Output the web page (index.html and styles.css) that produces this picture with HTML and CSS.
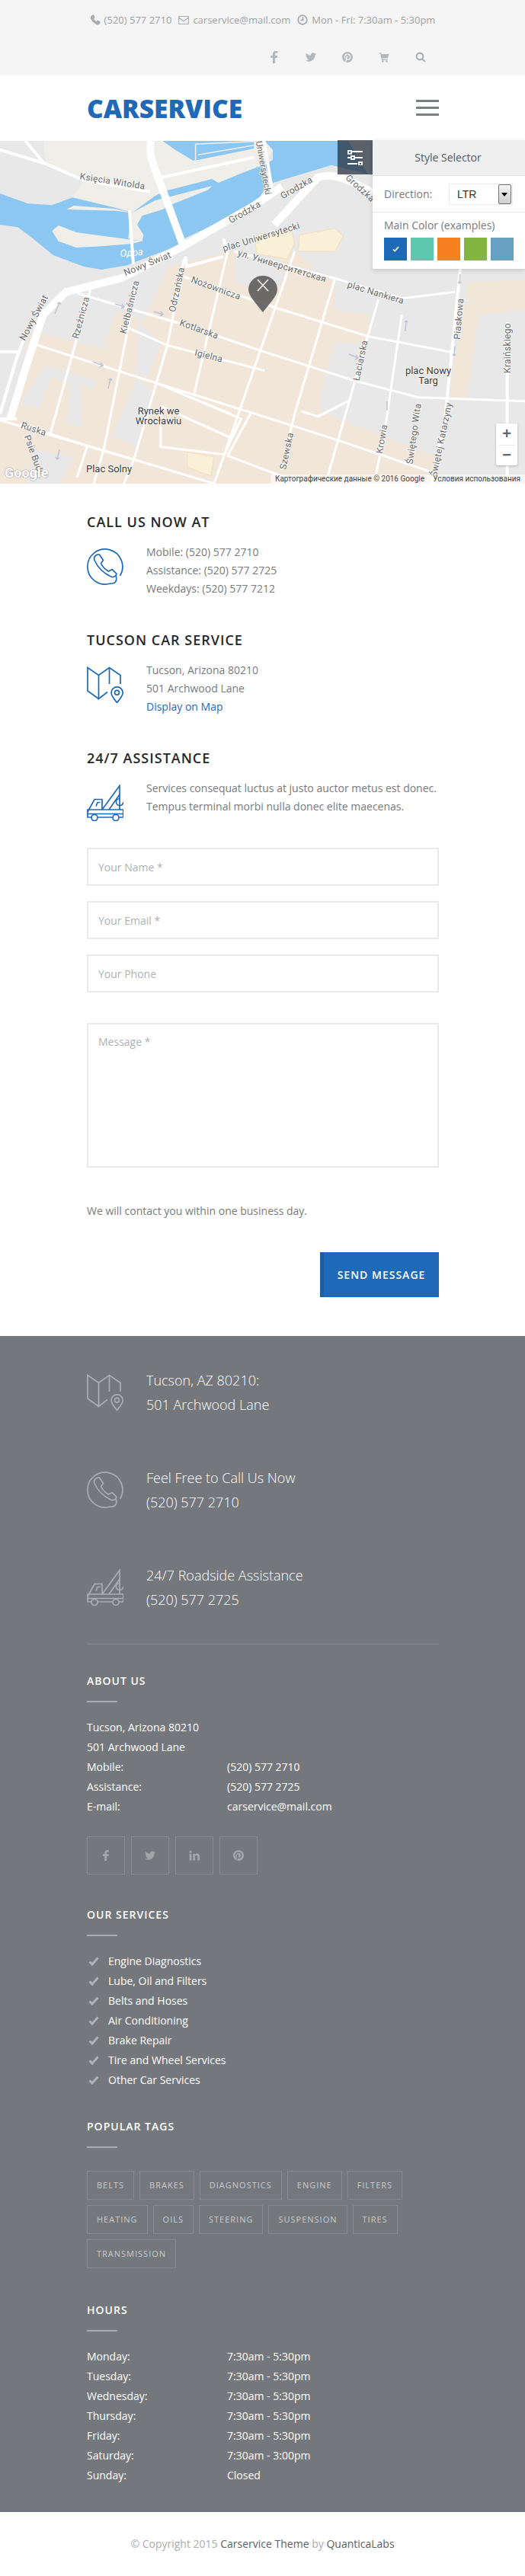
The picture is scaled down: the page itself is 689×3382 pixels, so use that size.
FILE: index.html
```html
<!DOCTYPE html>
<html>
<head>
    <meta charset="UTF-8">
    <meta name="viewport" content="width=device-width, initial-scale=1.0">
    <title>Contact - Carservice</title>
    <link rel="stylesheet" href="styles.css">
</head>
<body>
    <!-- icones reutilisees -->
    <svg class="icon-defs" width="0" height="0">
        <symbol id="i-phone-round" viewBox="0 0 48 48">
            <path d="M43.5 36A23 23 0 1 0 30 46.2C35 46.6 38 44.5 38.6 41.5 39 39.5 38.6 37 38 35"/>
            <path d="M11.5 9.5C9.5 11 9 13 10 15.5 14 24.5 22 32.500 31.500 37 34.500 38.200 37.500 36.800 39 33.500L33.200 27.500 28.500 30C24.500 28 20.500 24 18.500 19.500L21.500 15.500 16.500 8.200C15 7.400 13 8.200 11.500 9.500Z"/>
        </symbol>
        <symbol id="i-map" viewBox="0 0 48 48">
            <path d="M15.500 42.500L1 32V1.500L15.500 11.500 29.500 1.500 44 11.500V23"/>
            <path d="M15.500 11.500V42.500L27 33.500M29.500 1.500V23"/>
            <path d="M39.500 47.500C35 42 32 38.500 32 34.500A7.600 7.600 0 0 1 47.200 34.500C47.200 38.500 44 42 39.500 47.500Z"/>
            <circle cx="39.500" cy="34.300" r="3"/>
        </symbol>
        <symbol id="i-tow" viewBox="0 0 48 48">
            <path d="M20 33H1L1 37.500V43H6M14.500 43H33.500M42 43H47.800V33H20"/>
            <path d="M1 36L10 19.500H20V33M12 28.500L14 23.500H17.500"/>
            <path d="M20 33L43 1.500V33M29 33L43 13M1 38.500H47.800"/>
            <path d="M43 18.500A4.500 4.500 0 0 0 43 27.500 4.500 4.500 0 0 0 47.800 23"/>
            <circle cx="10" cy="43.500" r="4"/>
            <circle cx="38" cy="43.500" r="4"/>
        </symbol>
        <symbol id="i-fb" viewBox="0 0 16 24">
            <path d="M10.800 0C7 0 5 2.200 5 5.700V9H1v4.500h4V24h4.800V13.500h4l.6-4.500H9.800V6.200c0-1.400.4-2.100 2-2.100h2.700V.2C14 .1 12.500 0 10.800 0z"/>
        </symbol>
        <symbol id="i-tw" viewBox="0 0 24 24">
            <path d="M23.953 4.570a10 10 0 01-2.825.775 4.958 4.958 0 002.163-2.723c-.951.555-2.005.959-3.127 1.184a4.920 4.920 0 00-8.384 4.482C7.690 8.095 4.067 6.130 1.640 3.162a4.822 4.822 0 00-.666 2.475c0 1.710.870 3.213 2.188 4.096a4.904 4.904 0 01-2.228-.616v.060a4.923 4.923 0 003.946 4.827 4.996 4.996 0 01-2.212.085 4.936 4.936 0 004.604 3.417 9.867 9.867 0 01-6.102 2.105c-.390 0-.779-.023-1.170-.067a13.995 13.995 0 007.557 2.209c9.053 0 13.998-7.496 13.998-13.985 0-.210 0-.420-.015-.630A9.935 9.935 0 0024 4.590z"/>
        </symbol>
        <symbol id="i-pin" viewBox="0 0 24 24">
            <path d="M12.017 0C5.396 0 .029 5.367.029 11.987c0 5.079 3.158 9.417 7.618 11.162-.105-.949-.199-2.403.041-3.439.219-.937 1.406-5.957 1.406-5.957s-.359-.720-.359-1.781c0-1.663.967-2.911 2.168-2.911 1.024 0 1.518.769 1.518 1.688 0 1.029-.653 2.567-.992 3.992-.285 1.193.600 2.165 1.775 2.165 2.128 0 3.768-2.245 3.768-5.487 0-2.861-2.063-4.869-5.008-4.869-3.410 0-5.409 2.562-5.409 5.199 0 1.033.394 2.143.889 2.741.099.120.112.225.085.345-.090.375-.293 1.199-.334 1.363-.053.225-.172.271-.401.165-1.495-.690-2.433-2.878-2.433-4.646 0-3.776 2.748-7.252 7.920-7.252 4.158 0 7.392 2.967 7.392 6.923 0 4.135-2.607 7.462-6.233 7.462-1.214 0-2.354-.629-2.758-1.379l-.749 2.848c-.269 1.045-1.004 2.352-1.498 3.146 1.123.345 2.306.535 3.550.535 6.607 0 11.985-5.365 11.985-11.987C23.970 5.390 18.592.026 11.985.026L12.017 0z"/>
        </symbol>
        <symbol id="i-in" viewBox="0 0 24 24">
            <path d="M1 8h4.800v15H1zM3.400 1a2.700 2.700 0 1 1 0 5.400 2.700 2.700 0 0 1 0-5.400zM9 8h4.600v2.100c.7-1.300 2.300-2.500 4.700-2.500 4.600 0 5.700 3 5.700 7V23h-4.800v-7.400c0-1.800 0-4-2.500-4s-2.900 1.900-2.900 3.900V23H9z"/>
        </symbol>
        <symbol id="i-cart" viewBox="0 0 24 24">
            <path d="M1 2h4.500l.8 3H23l-2.500 9.500H8.600l.5 2H20v2.500H7L3.800 4.500H1z"/>
            <circle cx="9" cy="21.500" r="2.300"/>
            <circle cx="18" cy="21.500" r="2.300"/>
        </symbol>
        <symbol id="i-check" viewBox="0 0 14 12">
            <path d="M1.500 6.500L5 10 12.500 1.500"/>
        </symbol>
    </svg>

    <div class="topbar">
        <ul class="top-contact">
            <li>
                <svg class="top-ico" viewBox="0 0 14 14"><path class="ico-fill" d="M3 .8L5 .3 6.700 4 5.200 5.400C5.800 7.200 7 8.400 8.700 9.100L10.200 7.600 13.700 9.500 13.200 11.500C12.500 13 10.800 13.800 9 13.200 5.200 11.800 2.300 8.800 1 5 .5 3.200 1.500 1.500 3 .8Z"/></svg>
                (520) 577 2710
            </li>
            <li>
                <svg class="top-ico" viewBox="0 0 14 14"><path class="ico-line" d="M.7 2.500H13.300V12.500H.7ZM.7 4L7 9 13.300 4"/></svg>
                carservice@mail.com
            </li>
            <li>
                <svg class="top-ico" viewBox="0 0 14 14"><circle class="ico-line ico-thick" cx="7" cy="7" r="5.800"/><path class="ico-line ico-thick" d="M7.500 3.500V7.500H4.500"/></svg>
                Mon - Fri: 7:30am - 5:30pm
            </li>
        </ul>
        <ul class="top-social">
            <li><svg class="top-soc"><use href="#i-fb"/></svg></li>
            <li><svg class="top-soc"><use href="#i-tw"/></svg></li>
            <li><svg class="top-soc"><use href="#i-pin"/></svg></li>
            <li><svg class="top-soc"><use href="#i-cart"/></svg></li>
            <li>
                <svg class="top-soc" viewBox="0 0 16 16"><circle class="ico-line ico-search" cx="6.800" cy="6.800" r="5"/><path class="ico-line ico-search" d="M10.500 10.500L14.800 15"/></svg>
            </li>
        </ul>
    </div>

    <header class="site-header">
        <a href="#" class="logo">CARSERVICE</a>
        <div class="burger"><span></span><span></span><span></span></div>
    </header>

    <section class="map">
        <svg class="map-svg" viewBox="0 0 689 450" width="689" height="450">
            <rect class="m-base" width="689" height="450"/>

            <!-- riviere et quais, coordonnees du zoom gauche -->
            <g transform="translate(0,-5) scale(.3333)">
                <path class="m-land" d="M170 15H1075V50L1040 110 1040 230 640 330 510 292 285 238 330 170 180 105Z"/>
                <path class="m-water" d="M0 222L110 262 205 268 285 238 455 278 520 298 610 232 650 212 700 400 720 420 500 505 400 522 330 510 210 465 130 400 70 355 0 345Z"/>
                <path class="m-water" d="M650 212L835 165 860 180 945 145 1035 110 1040 210 1000 270 725 400 670 270Z"/>
                <path class="m-water" d="M640 15L690 50 760 92 780 90 1000 45V15Z"/>
                <path class="m-land" d="M262 285L290 270 450 282 520 298 610 250 835 192 820 208 670 268 640 285 560 310 540 345 565 385 560 410 505 400 515 298 455 290Z"/>
                <path class="m-land" d="M205 370L230 348 300 375 450 395 560 410 520 420 400 430 300 435 230 410Z"/>
                <path class="m-pier" d="M770 90V28L1000 17M780 70L1000 32"/>
            </g>

            <!-- ilots et batiments, coordonnees du zoom bas -->
            <g transform="translate(0,145) scale(.4394,.3333)">
                <path class="m-beige" d="M500 60L680 0H880L1000 110V230L1110 250 1090 360 1000 360 955 580 960 630 1300 810 1290 915H0V665L50 620 70 440 90 310 310 385 345 235 430 270 490 100Z"/>
                <path class="m-beige" d="M1400 120L1568 110V230L1430 250 1395 580H1340L1380 270Z"/>
                <path class="m-base" d="M700 20L850 60 840 130 705 115Z"/>
                <path class="m-base" d="M930 30L1010 10V100L930 80Z"/>
                <path class="m-base" d="M135 450L290 510 280 540 240 530 245 690 200 680 210 520 150 495 120 620 60 600Z"/>
                <path class="m-base" d="M335 730L410 500 460 560 415 770Z"/>
                <path class="m-base" d="M415 280L480 360 440 500 405 480Z"/>
                <path class="m-base" d="M100 780L220 810 180 915H80Z"/>
                <path class="m-yellow" d="M560 790L640 810 630 885 560 850Z"/>
            </g>
            <g transform="translate(0,-5) scale(.3333)">
                <path class="m-yellow" d="M1005 410L1020 380 1150 375 1160 420 1130 480 1010 460Z"/>
                <path class="m-base" d="M925 570L960 420 1000 420 1005 460 1100 480 1070 560 990 590Z"/>
            </g>
            <g transform="translate(0,-185) scale(.4394,.3333)">
                <path class="m-water" d="M790 555H1110V690L990 650 815 720 790 650 815 630 815 590Z"/>
                <path class="m-yellow" d="M895 925L1000 900 1025 930 1000 990H890Z"/>
            </g>
            <path class="m-base" d="M457 0H489V44H483L466 15Z"/>

            <!-- rues -->
            <g transform="translate(0,145) scale(.4394,.3333)" class="m-roads">
                <path d="M230 165L540 285 800 400 1060 510 1250 575 1568 590"/>
                <path d="M550 100L830 225 1100 335 1360 400"/>
                <path d="M700 0L1010 110 1200 185 1360 160"/>
                <path d="M380 300L500 370 790 470"/>
                <path d="M90 360L470 520 750 635 1000 740 1290 870"/>
                <path d="M470 520L720 660 690 735 480 610M540 560L690 640M480 610V770L670 800 720 660M750 635L680 805 900 915"/>
                <path d="M0 665L400 820 640 915"/>
                <path d="M680 0L580 560M880 0L640 915M1000 110L880 640 840 860M1130 190L980 880M1200 250L1150 700 1120 900"/>
                <path d="M410 120L310 780 280 915M270 150L150 720M550 30L500 370 400 820 370 915"/>
                <path d="M60 680L270 770 400 820M260 770L230 890M900 630L950 650 1040 590"/>
            </g>
            <g transform="translate(0,145) scale(.4394,.3333)" class="m-roads m-wide">
                <path d="M1515 280V915M1380 0L1330 650 1290 915"/>
                <path d="M0 660H50M0 395H60M0 640L50 420 70 350"/>
            </g>
            <g transform="translate(0,-5) scale(.3333)" class="m-roads m-wide">
                <path d="M630 160L1000 80M0 50L180 105 330 170 590 215"/>
                <path d="M1040 15L1070 200M730 470L735 510 880 470M880 400L890 440"/>
                <path d="M510 290L525 500M100 15L175 105"/>
            </g>
            <g transform="translate(0,-5) scale(.3333)" class="m-roads m-main">
                <path d="M40 1110L110 880 170 700 260 610 480 555 720 430 1000 270 1110 195"/>
                <path d="M595 15Q585 60 605 110L720 425"/>
            </g>
            <path class="m-roads m-main2" d="M360 110L417 48C430 43 450 45 489 68"/>

            <!-- sens uniques -->
            <g class="m-arrows">
                <path d="M72 227L78 212M75 214L78 212 80 215"/>
                <path d="M151 214L163 218M160 214L163 218 159 220"/>
                <path d="M202 224L214 228M211 224L214 228 210 230"/>
                <path d="M122 290L135 295M132 291L135 295 131 297"/>
                <path d="M142 325L145 312M142 314L145 312 147 315"/>
                <path d="M78 405L75 418M73 415L75 418 78 416"/>
                <path d="M458 280L470 285M467 281L470 285 466 287"/>
                <path d="M532 250L533 236M531 238L533 236 535 238"/>
                <path d="M604 175L603 187M601 185L603 187 605 185"/>
                <path d="M597 270L596 282M594 280L596 282 598 280"/>
                <path d="M508 342L508 354"/>
            </g>

            <!-- noms de rues -->
            <g class="m-label">
                <text transform="translate(147,57) rotate(9)">Księcia Witolda</text>
                <text transform="translate(195,165) rotate(-22)">Nowy Świat</text>
                <text transform="translate(48,234) rotate(-62)">Nowy Świat</text>
                <text transform="translate(323,97) rotate(-30)">Grodzka</text>
                <text transform="translate(391,65) rotate(-30)">Grodzka</text>
                <text transform="translate(470,65) rotate(42)">Grodzka</text>
                <text transform="translate(344,130) rotate(-17)">plac Uniwersytecki</text>
                <text transform="translate(369,168) rotate(17)">ул. Университетская</text>
                <text transform="translate(110,233) rotate(-75)">Rzeźnicza</text>
                <text transform="translate(174,219) rotate(-76)">Kiełbaśnicza</text>
                <text transform="translate(236,196) rotate(-78)">Odrzańska</text>
                <text transform="translate(282,197) rotate(20)">Nożownicza</text>
                <text transform="translate(260,251) rotate(20)">Kotlarska</text>
                <text transform="translate(273,286) rotate(14)">Igielna</text>
                <text transform="translate(43,382) rotate(18)">Ruska</text>
                <text transform="translate(41,414) rotate(70)">Psie Budy</text>
                <text transform="translate(380,408) rotate(-78)">Szewska</text>
                <text transform="translate(492,203) rotate(17)">plac Nankiera</text>
                <text transform="translate(477,289) rotate(-78)">Łaciarska</text>
                <text transform="translate(606,234) rotate(-85)">Piaskowa</text>
                <text transform="translate(670,272) rotate(-90)">Kraińskiego</text>
                <text transform="translate(505,392) rotate(-80)">Krowia</text>
                <text transform="translate(547,385) rotate(-82)">Świętego Wita</text>
                <text transform="translate(583,393) rotate(-78)">Świętej Katarzyny</text>
                <text class="m-tight" transform="translate(342,36) rotate(80)">Uniwersytecki</text>
            </g>
            <g class="m-place">
                <text x="208" y="359">Rynek we</text>
                <text x="208" y="372">Wrocławiu</text>
                <text x="143" y="435">Plac Solny</text>
                <text x="562" y="306">plac Nowy</text>
                <text x="562" y="319">Targ</text>
            </g>
            <text class="m-river" transform="translate(173,151) rotate(-5)">Одра</text>
            <text class="m-google" x="6" y="442">Google</text>

            <!-- marqueur -->
            <path class="m-marker" d="M345 225C337 214 326 204 326 195A19 18 0 0 1 364 195C364 204 353 214 345 225Z"/>
            <path class="m-marker-x" d="M338 182L352 197M352 182L338 197"/>
        </svg>

        <div class="map-zoom">
            <span class="zoom-btn">+</span>
            <span class="zoom-btn">−</span>
        </div>
        <div class="map-terms">
            <span>Картографические данные © 2016 Google</span>
            <span>Условия использования</span>
        </div>

        <div class="selector-toggle">
            <svg viewBox="0 0 20 20" width="20" height="20">
                <path class="toggle-line" d="M6 2H20M0 10H4M10 10H20M0 18H13"/>
                <path class="toggle-line toggle-box" d="M1 .8H5V4.800H1ZM5 8H9V12H5ZM15 16H19V20H15Z"/>
            </svg>
        </div>
        <aside class="selector">
            <div class="selector-title">Style Selector</div>
            <div class="selector-row">
                <label>Direction:</label>
                <div class="fake-select">
                    <span>LTR</span>
                    <i class="fake-arrow"></i>
                </div>
            </div>
            <div class="selector-colors">
                <label>Main Color (examples)</label>
                <div class="swatches">
                    <span class="swatch c-blue">
                        <svg viewBox="0 0 14 12" width="9" height="8"><path d="M1.500 6.500L5 10 12.500 1.500"/></svg>
                    </span>
                    <span class="swatch c-teal"></span>
                    <span class="swatch c-orange"></span>
                    <span class="swatch c-green"></span>
                    <span class="swatch c-sky"></span>
                </div>
            </div>
        </aside>
    </section>

    <main class="contact">
        <h3 class="info-title">Call Us Now At</h3>
        <div class="info-row">
            <svg class="line-ico"><use href="#i-phone-round"/></svg>
            <p>Mobile: (520) 577 2710<br>Assistance: (520) 577 2725<br>Weekdays: (520) 577 7212</p>
        </div>

        <h3 class="info-title">Tucson Car Service</h3>
        <div class="info-row">
            <svg class="line-ico"><use href="#i-map"/></svg>
            <p>Tucson, Arizona 80210<br>501 Archwood Lane<br><a href="#">Display on Map</a></p>
        </div>

        <h3 class="info-title">24/7 Assistance</h3>
        <div class="info-row">
            <svg class="line-ico"><use href="#i-tow"/></svg>
            <p>Services consequat luctus at justo auctor metus est donec.<br>Tempus terminal morbi nulla donec elite maecenas.</p>
        </div>

        <form class="contact-form">
            <input type="text" placeholder="Your Name *">
            <input type="email" placeholder="Your Email *">
            <input type="text" placeholder="Your Phone">
            <textarea placeholder="Message *"></textarea>
            <p class="form-note">We will contact you within one business day.</p>
            <div class="form-actions">
                <button type="button" class="send-btn">Send Message</button>
            </div>
        </form>
    </main>

    <footer class="footer">
        <div class="foot-contact">
            <svg class="line-ico"><use href="#i-map"/></svg>
            <p>Tucson, AZ 80210:<br>501 Archwood Lane</p>
        </div>
        <div class="foot-contact">
            <svg class="line-ico"><use href="#i-phone-round"/></svg>
            <p>Feel Free to Call Us Now<br>(520) 577 2710</p>
        </div>
        <div class="foot-contact">
            <svg class="line-ico"><use href="#i-tow"/></svg>
            <p>24/7 Roadside Assistance<br>(520) 577 2725</p>
        </div>

        <hr class="foot-rule">

        <h4 class="foot-title">About Us</h4>
        <div class="foot-about">
            <div>Tucson, Arizona 80210</div>
            <div>501 Archwood Lane</div>
            <div class="two-col"><span>Mobile:</span><span>(520) 577 2710</span></div>
            <div class="two-col"><span>Assistance:</span><span>(520) 577 2725</span></div>
            <div class="two-col"><span>E-mail:</span><span>carservice@mail.com</span></div>
        </div>
        <ul class="foot-social">
            <li><svg><use href="#i-fb"/></svg></li>
            <li><svg><use href="#i-tw"/></svg></li>
            <li><svg><use href="#i-in"/></svg></li>
            <li><svg><use href="#i-pin"/></svg></li>
        </ul>

        <h4 class="foot-title">Our Services</h4>
        <ul class="foot-services">
            <li><svg class="check"><use href="#i-check"/></svg>Engine Diagnostics</li>
            <li><svg class="check"><use href="#i-check"/></svg>Lube, Oil and Filters</li>
            <li><svg class="check"><use href="#i-check"/></svg>Belts and Hoses</li>
            <li><svg class="check"><use href="#i-check"/></svg>Air Conditioning</li>
            <li><svg class="check"><use href="#i-check"/></svg>Brake Repair</li>
            <li><svg class="check"><use href="#i-check"/></svg>Tire and Wheel Services</li>
            <li><svg class="check"><use href="#i-check"/></svg>Other Car Services</li>
        </ul>

        <h4 class="foot-title">Popular Tags</h4>
        <div class="foot-tags">
            <a href="#">Belts</a>
            <a href="#">Brakes</a>
            <a href="#">Diagnostics</a>
            <a href="#">Engine</a>
            <a href="#">Filters</a>
            <a href="#">Heating</a>
            <a href="#">Oils</a>
            <a href="#">Steering</a>
            <a href="#">Suspension</a>
            <a href="#">Tires</a>
            <a href="#">Transmission</a>
        </div>

        <h4 class="foot-title">Hours</h4>
        <div class="foot-hours">
            <div class="two-col"><span>Monday:</span><span>7:30am - 5:30pm</span></div>
            <div class="two-col"><span>Tuesday:</span><span>7:30am - 5:30pm</span></div>
            <div class="two-col"><span>Wednesday:</span><span>7:30am - 5:30pm</span></div>
            <div class="two-col"><span>Thursday:</span><span>7:30am - 5:30pm</span></div>
            <div class="two-col"><span>Friday:</span><span>7:30am - 5:30pm</span></div>
            <div class="two-col"><span>Saturday:</span><span>7:30am - 3:00pm</span></div>
            <div class="two-col"><span>Sunday:</span><span>Closed</span></div>
        </div>
    </footer>

    <div class="copyright">
        © Copyright 2015&nbsp;<a href="#">Carservice Theme</a>&nbsp;by&nbsp;<a href="#">QuanticaLabs</a>
    </div>
</body>
</html>
```

FILE: styles.css
```css
* {
    margin: 0;
    padding: 0;
    box-sizing: border-box;
}

body {
    background-color: #ffffff;
    color: #777a7e;
    font-family: "Open Sans", "Liberation Sans", sans-serif;
    font-size: 14px;
    line-height: 24px;
}

ul {
    list-style: none;
}

a {
    text-decoration: none;
}

.icon-defs {
    position: absolute;
}

/* barre du haut */
.topbar {
    height: 99px;
    background-color: #f5f5f5;
    padding-top: 14px;
}

.top-contact {
    display: flex;
    justify-content: center;
    gap: 9px;
    font-size: 13px;
    color: #9da1a5;
}

.top-contact li {
    display: flex;
    align-items: center;
    gap: 5px;
}

.top-ico {
    width: 14px;
    height: 14px;
    flex: none;
}

.ico-fill {
    fill: #a9adb1;
}

.ico-line {
    fill: none;
    stroke: #a9adb1;
    stroke-width: 1.1;
}

.ico-thick {
    stroke-width: 1.8;
}

.ico-search {
    stroke-width: 2.4;
}

.top-social {
    display: flex;
    justify-content: flex-end;
    gap: 34px;
    padding-right: 130px;
    margin-top: 29px;
}

.top-soc {
    display: block;
    width: 14px;
    height: 16px;
    fill: #b5b8bb;
}

/* en-tete */
.site-header {
    height: 86px;
    background-color: #ffffff;
    display: flex;
    align-items: center;
    justify-content: space-between;
    padding: 0 113px 0 114px;
}

.logo {
    font-size: 34px;
    font-weight: 800;
    color: #1e69b8;
    transform: scaleX(.985);
    transform-origin: left center;
}

.burger {
    width: 30px;
    height: 21px;
    display: flex;
    flex-direction: column;
    justify-content: space-between;
    margin-top: -1px;
}

.burger span {
    display: block;
    height: 3px;
    background-color: #7c7f83;
}

/* carte */
.map {
    position: relative;
    height: 450px;
}

.map-svg {
    display: block;
}

.m-base {
    fill: #e8e8e8;
}

.m-land {
    fill: #f0eee9;
}

.m-water {
    fill: #8cc7f2;
}

.m-pier {
    fill: none;
    stroke: #f0eee9;
    stroke-width: 1.5;
    vector-effect: non-scaling-stroke;
}

.m-beige {
    fill: #f2e6d9;
}

.m-yellow {
    fill: #faf0d8;
    stroke: #f2dfbb;
    stroke-width: 1;
    vector-effect: non-scaling-stroke;
}

.m-roads path,
.m-main2 {
    fill: none;
    stroke: #ffffff;
    stroke-width: 3;
    vector-effect: non-scaling-stroke;
}

.m-wide path {
    stroke-width: 4;
}

.m-main path,
.m-main2 {
    stroke-width: 10;
}

.m-arrows path {
    fill: none;
    stroke: #bcc3d2;
    stroke-width: 1.5;
}

.m-label text {
    font-family: Roboto, "Liberation Sans", sans-serif;
    font-size: 12px;
    letter-spacing: .3px;
    fill: #6b6b6b;
    text-anchor: middle;
    stroke: #ffffff;
    stroke-width: 2px;
    stroke-opacity: .6;
    paint-order: stroke;
}

.m-label .m-tight {
    font-size: 11.5px;
    letter-spacing: 0;
}

.m-place text {
    font-family: Roboto, "Liberation Sans", sans-serif;
    font-size: 13px;
    fill: #3c3c3c;
    text-anchor: middle;
    stroke: #ffffff;
    stroke-width: 2px;
    stroke-opacity: .7;
    paint-order: stroke;
}

.m-river {
    font-family: Roboto, "Liberation Sans", sans-serif;
    font-size: 13px;
    font-style: italic;
    fill: #ffffff;
    text-anchor: middle;
}

.m-google {
    font-family: Roboto, "Liberation Sans", sans-serif;
    font-size: 18px;
    font-weight: 700;
    fill: #ffffff;
    stroke: #9a9a9a;
    stroke-width: 1px;
    paint-order: stroke;
}

.m-marker {
    fill: #5c5c5c;
    fill-opacity: .9;
}

.m-marker-x {
    fill: none;
    stroke: #f2f0ec;
    stroke-width: 1.6;
}

.map-zoom {
    position: absolute;
    left: 651px;
    top: 371px;
    width: 28px;
    height: 55px;
    background-color: #ffffff;
    box-shadow: 0 1px 3px rgba(0, 0, 0, 0.25);
    border-radius: 2px;
}

.zoom-btn {
    display: block;
    height: 27.5px;
    line-height: 27px;
    text-align: center;
    font-family: "Liberation Sans", sans-serif;
    font-size: 20px;
    font-weight: 700;
    color: #666666;
}

.zoom-btn + .zoom-btn {
    background: linear-gradient(#e6e6e6, #e6e6e6) center top / 20px 1px no-repeat;
}

.map-terms {
    position: absolute;
    right: 0;
    bottom: 0;
    left: 355px;
    height: 12px;
    padding: 0 6px;
    display: flex;
    justify-content: space-between;
    background: rgba(255, 255, 255, 0.6);
    font-family: Roboto, "Liberation Sans", sans-serif;
    font-size: 10px;
    line-height: 12px;
    color: #444444;
}

/* selecteur de style */
.selector-toggle {
    position: absolute;
    left: 443px;
    top: -1px;
    width: 46px;
    height: 45px;
    display: flex;
    align-items: center;
    justify-content: center;
    background: rgba(35, 45, 58, 0.72);
}

.toggle-line {
    fill: none;
    stroke: #ffffff;
    stroke-width: 1.8;
}

.selector {
    position: absolute;
    left: 489px;
    top: -1px;
    width: 200px;
    height: 169px;
    background-color: #ffffff;
    box-shadow: 0 2px 6px rgba(0, 0, 0, 0.15);
}

.selector-title {
    height: 47px;
    background-color: #efefef;
    border-bottom: 1px solid #e4e4e4;
    text-align: center;
    line-height: 46px;
    padding-right: 2px;
    color: #55585c;
}

.selector-row {
    height: 48px;
    display: flex;
    align-items: center;
    justify-content: space-between;
    padding: 0 16px 0 15px;
    border-bottom: 1px solid #e7e7e7;
}

.fake-select {
    width: 84px;
    height: 28px;
    display: flex;
    align-items: center;
    justify-content: space-between;
    padding-left: 10px;
    border: 1px solid #ececec;
    color: #333333;
    font-family: "Liberation Sans", sans-serif;
}

.fake-arrow {
    position: relative;
    width: 17px;
    height: 26px;
    margin-right: 1px;
    border: 1px solid #707070;
    border-radius: 2px;
    background: linear-gradient(#f4f4f4, #cfcfcf);
}

.fake-arrow::after {
    content: '';
    position: absolute;
    top: 10px;
    left: 3px;
    border-left: 4px solid transparent;
    border-right: 4px solid transparent;
    border-top: 5px solid #000000;
}

.selector-colors {
    padding: 5px 15px 0;
}

.swatches {
    display: flex;
    gap: 5px;
    margin-top: 4px;
}

.swatch {
    width: 30px;
    height: 30px;
    display: flex;
    align-items: center;
    justify-content: center;
}

.swatch svg {
    fill: none;
    stroke: #ffffff;
    stroke-width: 2.5;
}

.c-blue { background-color: #1e69b8; }
.c-teal { background-color: #5fc7ae; }
.c-orange { background-color: #f6821f; }
.c-green { background-color: #82b541; }
.c-sky { background-color: #66a1c3; }

/* bloc contact */
.contact {
    padding: 38px 113px 51px 114px;
}

.info-title {
    font-size: 18px;
    font-weight: 600;
    line-height: 24px;
    letter-spacing: 1px;
    text-transform: uppercase;
    color: #25282a;
    margin-bottom: 16px;
}

.info-row {
    display: flex;
    margin-bottom: 43px;
}

.info-row a {
    color: #1e69b8;
}

.line-ico {
    width: 48px;
    height: 48px;
    flex: none;
    margin: 7px 30px -7px 0;
    fill: none;
    stroke: #1e69b8;
    stroke-width: 1.7;
}

.contact-form {
    display: flex;
    flex-direction: column;
    gap: 20px;
    margin-top: -1px;
}

.contact-form input,
.contact-form textarea {
    display: block;
    width: 100%;
    height: 50px;
    padding: 0 13px;
    border: 2px solid #e8eaeb;
    background: #ffffff;
    font-family: "Open Sans", "Liberation Sans", sans-serif;
    font-size: 14px;
    color: #777a7e;
    resize: none;
    outline: none;
}

.contact-form textarea {
    height: 190px;
    margin-top: 20px;
    padding-top: 11px;
    line-height: 24px;
}

.contact-form ::placeholder {
    color: #aeb2b6;
    opacity: 1;
}

.form-note {
    margin-top: 25px;
}

.form-actions {
    display: flex;
    justify-content: flex-end;
    margin-top: 22px;
}

.send-btn {
    width: 156px;
    height: 59px;
    border: none;
    border-left: 5px solid #1c5da6;
    background-color: #1e69b8;
    color: #ffffff;
    font-family: "Open Sans", "Liberation Sans", sans-serif;
    font-size: 14px;
    font-weight: 600;
    letter-spacing: 1px;
    text-transform: uppercase;
}

/* pied de page */
.footer {
    background-color: #74777c;
    color: #ffffff;
    padding: 42px 113px 35px 114px;
}

.foot-contact {
    display: flex;
    margin-bottom: 64px;
}

.foot-contact:nth-child(3) {
    margin-bottom: 42px;
}

.foot-contact p {
    font-size: 18px;
    font-weight: 300;
    line-height: 32px;
}

.foot-contact .line-ico {
    margin: 8px 30px 0 0;
    stroke: #abaeb0;
}

.foot-rule {
    border: none;
    border-top: 1px solid #85888c;
    margin-bottom: 38px;
}

.foot-title {
    font-size: 14px;
    font-weight: 600;
    line-height: 20px;
    letter-spacing: 1px;
    text-transform: uppercase;
    color: #ffffff;
    margin-bottom: 20px;
}

.foot-title::after {
    content: '';
    display: block;
    width: 40px;
    height: 2px;
    margin-top: 16px;
    background-color: #a9acaf;
}

.foot-about,
.foot-services,
.foot-hours {
    line-height: 26px;
}

.two-col {
    display: flex;
}

.two-col span:first-child {
    width: 184px;
}

.foot-social {
    display: flex;
    gap: 8px;
    margin: 26px 0 43px;
}

.foot-social li {
    width: 50px;
    height: 50px;
    display: flex;
    align-items: center;
    justify-content: center;
    border: 1px solid #878a8e;
}

.foot-social svg {
    width: 14px;
    height: 14px;
    fill: #a3a6a9;
}

.foot-services {
    margin-bottom: 38px;
}

.foot-services li {
    display: flex;
    align-items: center;
}

.check {
    width: 14px;
    height: 12px;
    margin: 0 12px 0 2px;
    fill: none;
    stroke: #b0b3b5;
    stroke-width: 3;
}

.foot-tags {
    display: flex;
    flex-wrap: wrap;
    gap: 7px;
    padding-top: 10px;
    margin-bottom: 45px;
}

.foot-tags a {
    height: 38px;
    padding: 0 12px;
    border: 1px solid #878a8e;
    font-size: 11px;
    line-height: 36px;
    letter-spacing: 1px;
    text-transform: uppercase;
    color: #c9cbcd;
}

.copyright {
    height: 84px;
    display: flex;
    align-items: center;
    justify-content: center;
    color: #a9adb1;
}

.copyright a {
    color: #5d6064;
}
```
